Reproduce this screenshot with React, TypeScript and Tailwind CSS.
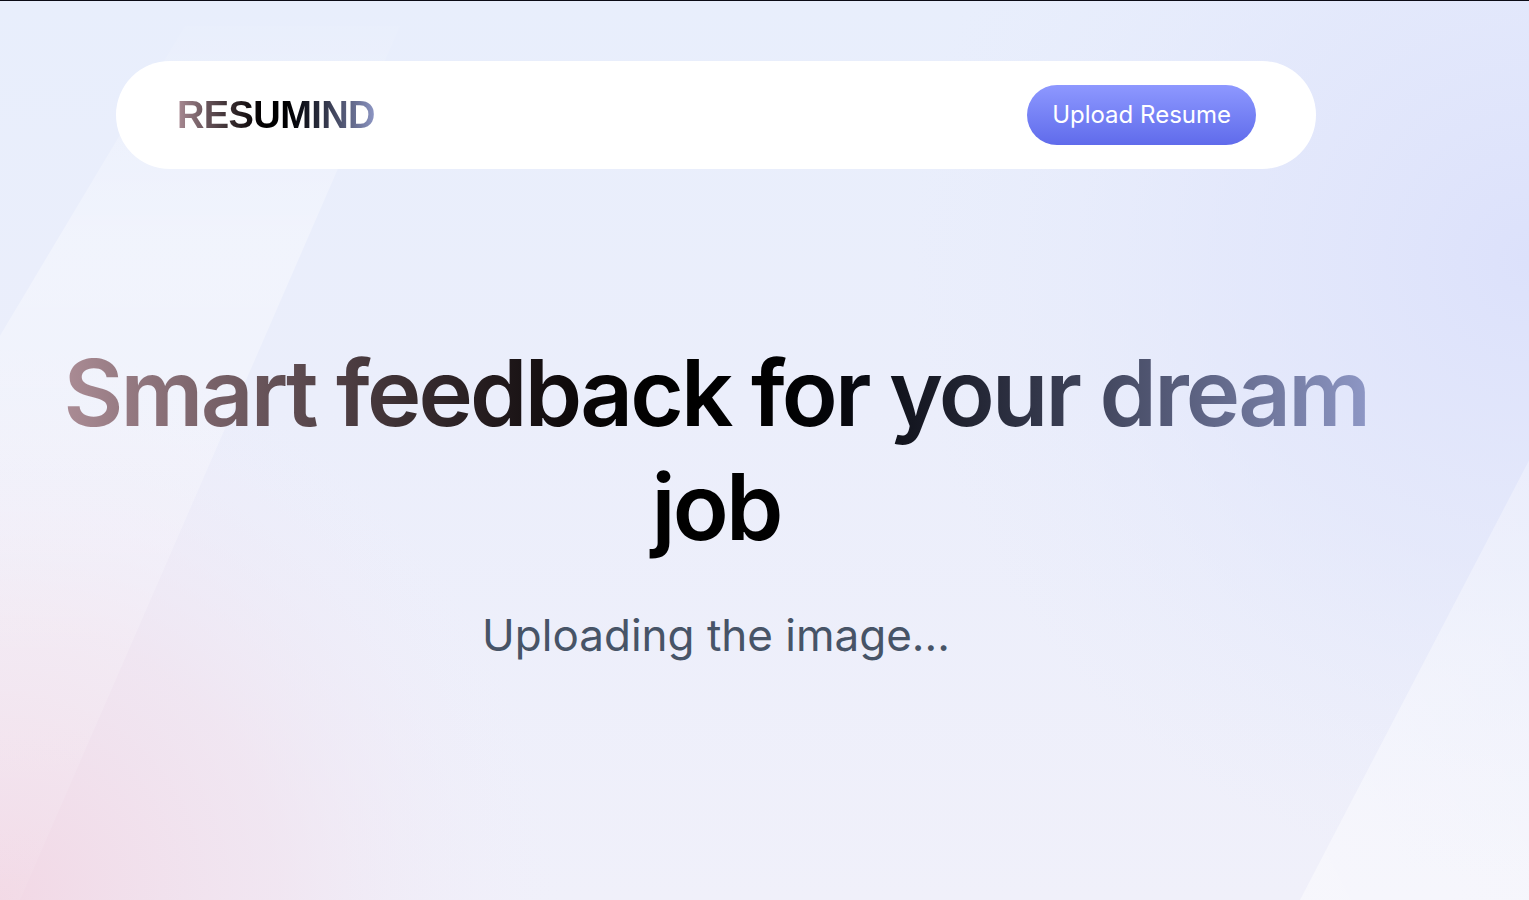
import React from "react";

function Background() {
  return (
    <svg
      className="absolute inset-0 w-full h-full"
      viewBox="0 0 1529 900"
      preserveAspectRatio="none"
      aria-hidden="true"
    >
      <defs>
        <linearGradient id="base" x1="0" y1="0" x2="0" y2="1">
          <stop offset="0" stopColor="#e8eefc" />
          <stop offset="0.45" stopColor="#ebeefb" />
          <stop offset="1" stopColor="#f0f0fa" />
        </linearGradient>
        <radialGradient id="blue" cx="1529" cy="260" r="620" gradientUnits="userSpaceOnUse">
          <stop offset="0" stopColor="#dce1fb" stopOpacity="1" />
          <stop offset="0.5" stopColor="#e0e5fb" stopOpacity="0.6" />
          <stop offset="1" stopColor="#e6ebfc" stopOpacity="0" />
        </radialGradient>
        <radialGradient id="pink" cx="0" cy="900" r="560" gradientUnits="userSpaceOnUse">
          <stop offset="0" stopColor="#f2d8e5" stopOpacity="1" />
          <stop offset="0.5" stopColor="#f1e2ee" stopOpacity="0.7" />
          <stop offset="1" stopColor="#f0eefa" stopOpacity="0" />
        </radialGradient>
        <linearGradient id="band" x1="0" y1="0" x2="0" y2="1">
          <stop offset="0" stopColor="#ffffff" stopOpacity="0.05" />
          <stop offset="0.25" stopColor="#ffffff" stopOpacity="0.35" />
          <stop offset="0.6" stopColor="#ffffff" stopOpacity="0.22" />
          <stop offset="1" stopColor="#ffffff" stopOpacity="0.05" />
        </linearGradient>
        <linearGradient id="band2" x1="1" y1="0" x2="0" y2="1">
          <stop offset="0" stopColor="#ffffff" stopOpacity="0.3" />
          <stop offset="1" stopColor="#ffffff" stopOpacity="0.45" />
        </linearGradient>
      </defs>
      <rect x="0" y="0" width="1529" height="900" fill="url(#base)" />
      <rect x="0" y="0" width="1529" height="900" fill="url(#blue)" />
      <rect x="0" y="0" width="1529" height="900" fill="url(#pink)" />
      <polygon points="0,335 185,25 400,25 20,900 0,900" fill="url(#band)" />
      <polygon points="1529,460 1529,900 1300,900" fill="url(#band2)" />
    </svg>
  );
}

export default function App() {
  return (
    <div
      className="relative min-h-screen h-[900px] overflow-hidden border-t border-[#0b0b16]"
      style={{ fontFamily: "Inter, 'Noto Sans', sans-serif" }}
    >
      <Background />
      <div className="relative w-[1432px] flex flex-col items-center pt-[60px]">
        <nav className="w-[1200px] h-[108px] bg-white rounded-full flex items-center justify-between pl-[61px] pr-[60px]">
          <p
            className="text-[38px] font-bold tracking-[-0.6px] leading-none bg-gradient-to-r from-[#AB8C95] via-[#000000] to-[#8E97C5] bg-clip-text text-transparent"
            style={{ fontFamily: "'Liberation Sans', Arial, sans-serif" }}
          >
            RESUMIND
          </p>
          <button className="h-[60px] px-[25px] rounded-full bg-gradient-to-b from-[#8e98ff] to-[#606beb] text-white text-[24px] leading-none">
            Upload Resume
          </button>
        </nav>
        <section className="flex flex-col items-center mt-[167px]">
          <h1 className="w-fit text-center text-[92px] leading-[114px] font-semibold tracking-[-2.8px] bg-gradient-to-r from-[#AB8C95] via-[#000000] to-[#8E97C5] bg-clip-text text-transparent">
            Smart feedback for your dream
            <br />
            job
          </h1>
          <h2 className="mt-[45px] text-[44px] leading-[1.2] text-[#475467]">
            Uploading the image...
          </h2>
        </section>
      </div>
    </div>
  );
}
